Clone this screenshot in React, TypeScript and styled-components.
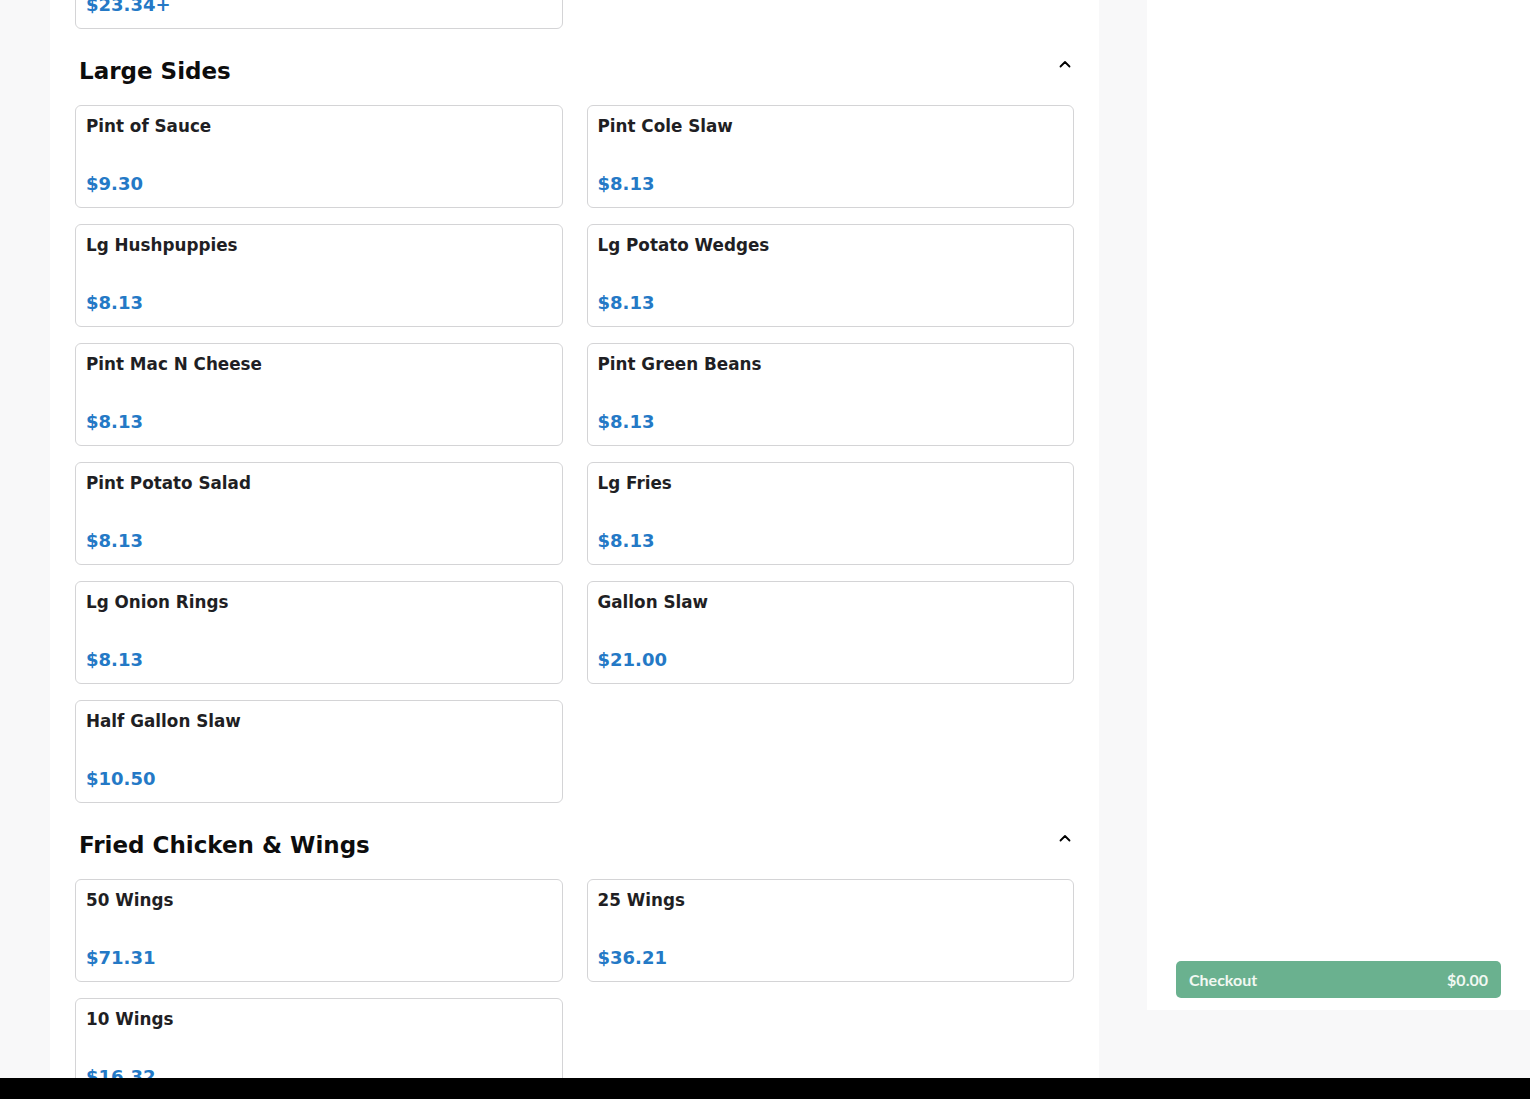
import { createGlobalStyle, styled } from "styled-components";

const GlobalStyle = createGlobalStyle`
  html, body {
    margin: 0;
    padding: 0;
    height: 100%;
    overflow: hidden;
    background: #f8f8f9;
    font-family: "DejaVu Sans", "Liberation Sans", sans-serif;
  }
`;

const Page = styled.div`
  display: flex;
  height: 100vh;
  padding-left: 50px;
  gap: 48px;
  box-sizing: border-box;
`;

const MenuColumn = styled.main`
  width: 1049px;
  height: 100vh;
  overflow: hidden;
  background: #ffffff;
  padding: 0 25px;
  box-sizing: border-box;
`;

/* list is scrolled: the first card only shows its bottom edge */
const MenuList = styled.div`
  margin-top: -74px;
`;

const Section = styled.section`
  margin-bottom: 29px;
`;

const SectionHeader = styled.div`
  display: flex;
  justify-content: space-between;
  align-items: flex-start;
  padding: 0 2px 0 4px;
  margin-bottom: 21px;
`;

const SectionTitle = styled.h2`
  margin: 0;
  font-size: 23px;
  font-weight: 700;
  color: #0d0d0d;
`;

const Chevron = styled.svg`
  width: 14px;
  height: 14px;
  margin-top: -1px;
`;

const CardGrid = styled.div`
  display: grid;
  grid-template-columns: 1fr 1fr;
  column-gap: 24px;
  row-gap: 16px;
`;

const ItemCard = styled.div`
  height: 103px;
  box-sizing: border-box;
  border: 1px solid #d4d4d6;
  border-radius: 6px;
  padding: 10px 10px 13px;
  display: flex;
  flex-direction: column;
  justify-content: space-between;
  background: #ffffff;
`;

const ItemName = styled.div`
  font-size: 16.8px;
  font-weight: 700;
  color: #1f1f24;
`;

const ItemPrice = styled.div`
  font-size: 18px;
  font-weight: 700;
  color: #2479c6;
`;

const Sidebar = styled.aside`
  width: 383px;
  height: 1010px;
  background: #ffffff;
  display: flex;
  flex-direction: column;
  justify-content: flex-end;
  padding: 0 29px 12px;
  box-sizing: border-box;
`;

const CheckoutButton = styled.button`
  display: flex;
  justify-content: space-between;
  align-items: center;
  height: 37px;
  border: none;
  border-radius: 5px;
  background: #6ab18f;
  color: #f1f8f2;
  padding: 0 13px;
  font-family: "Lato", "Open Sans", sans-serif;
  font-size: 16px;
  font-weight: 700;
  cursor: pointer;
`;

const BottomBar = styled.div`
  position: fixed;
  left: 0;
  right: 0;
  bottom: 0;
  height: 21px;
  background: #000000;
`;

interface MenuItem {
  name: string;
  price: string;
}

interface MenuSection {
  title: string;
  items: MenuItem[];
}

const sections: MenuSection[] = [
  {
    title: "Family Meals",
    items: [{ name: "Family Meal", price: "$23.34+" }],
  },
  {
    title: "Large Sides",
    items: [
      { name: "Pint of Sauce", price: "$9.30" },
      { name: "Pint Cole Slaw", price: "$8.13" },
      { name: "Lg Hushpuppies", price: "$8.13" },
      { name: "Lg Potato Wedges", price: "$8.13" },
      { name: "Pint Mac N Cheese", price: "$8.13" },
      { name: "Pint Green Beans", price: "$8.13" },
      { name: "Pint Potato Salad", price: "$8.13" },
      { name: "Lg Fries", price: "$8.13" },
      { name: "Lg Onion Rings", price: "$8.13" },
      { name: "Gallon Slaw", price: "$21.00" },
      { name: "Half Gallon Slaw", price: "$10.50" },
    ],
  },
  {
    title: "Fried Chicken & Wings",
    items: [
      { name: "50 Wings", price: "$71.31" },
      { name: "25 Wings", price: "$36.21" },
      { name: "10 Wings", price: "$16.32" },
    ],
  },
];

function ChevronUp() {
  return (
    <Chevron viewBox="0 0 14 14" fill="none">
      <path
        d="M2.5 9.5 L7 5 L11.5 9.5"
        stroke="#000"
        strokeWidth="1.8"
        strokeLinecap="round"
        strokeLinejoin="round"
      />
    </Chevron>
  );
}

export default function App() {
  return (
    <>
      <GlobalStyle />
      <Page>
        <MenuColumn>
          <MenuList>
            {sections.map((section, i) => (
              <Section key={section.title}>
                {i > 0 && (
                  <SectionHeader>
                    <SectionTitle>{section.title}</SectionTitle>
                    <ChevronUp />
                  </SectionHeader>
                )}
                <CardGrid>
                  {section.items.map((item) => (
                    <ItemCard key={item.name}>
                      <ItemName>{item.name}</ItemName>
                      <ItemPrice>{item.price}</ItemPrice>
                    </ItemCard>
                  ))}
                </CardGrid>
              </Section>
            ))}
          </MenuList>
        </MenuColumn>
        <Sidebar>
          <CheckoutButton>
            <span>Checkout</span>
            <span>$0.00</span>
          </CheckoutButton>
        </Sidebar>
      </Page>
      <BottomBar />
    </>
  );
}
